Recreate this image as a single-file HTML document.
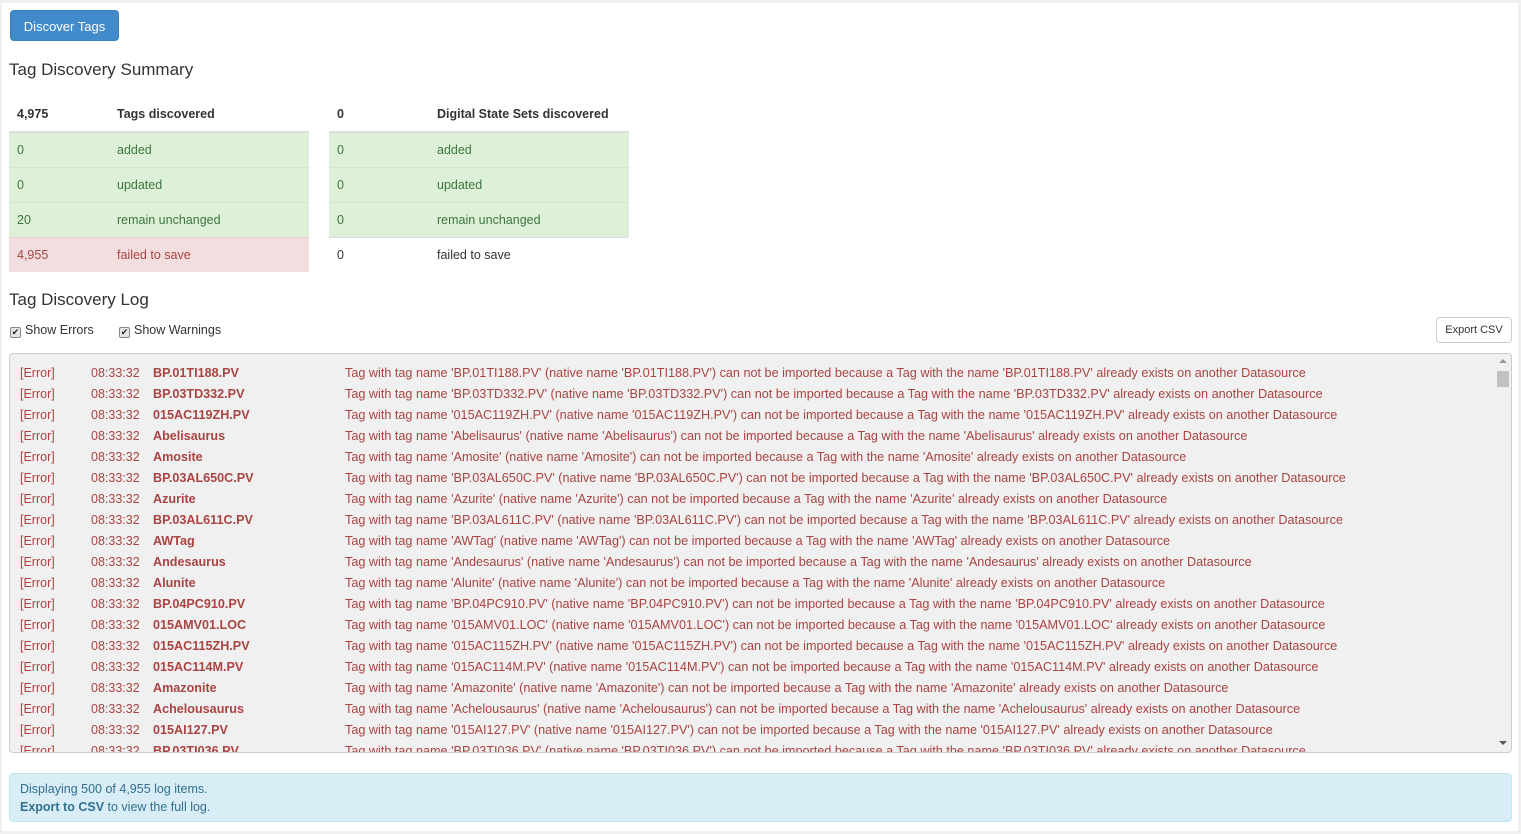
<!DOCTYPE html>
<html><head><meta charset="utf-8"><style>
*{box-sizing:border-box}
body{margin:0;width:1521px;height:834px;background:#f0f0f0;font-family:"Liberation Sans",sans-serif;font-size:13px;color:#333;overflow:hidden;position:relative}
#p{position:absolute;left:2px;top:3px;width:1516px;height:828px;background:#fff}
.abs{position:absolute}
.btn{left:10px;top:10px;width:109px;height:31px;background:#428bca;border-radius:4px;color:#fff;font-size:13px;line-height:31px;text-align:center;border:1px solid #3a7fbd}
h3{margin:0;font-weight:normal;font-size:17px;color:#333;position:absolute}
table{position:absolute;border-collapse:collapse;width:300px;font-size:12.5px}
td{height:35px;padding:0 8px;vertical-align:middle}
th{height:35px;text-align:left;padding:0 8px;border-bottom:2px solid #ddd;font-size:12.5px}
tr.s td{background:#dff0d8;color:#3c763d;border-top:1px solid #d3e6cb}
tr.d td{background:#f2dede;color:#a94442;border-top:1px solid #e8d0d0}
tr.w td{border-top:1px solid #ddd}
.cb{display:inline-block;width:11px;height:11px;border:1px solid #888;border-radius:2px;background:#e6e6e6;vertical-align:-1px;margin-right:4px;font-size:9px;line-height:9px;text-align:center;color:#222}
.exp{left:1436px;top:317px;width:76px;height:26px;border:1px solid #ccc;border-radius:4px;font-size:11px;text-align:center;line-height:24px;color:#333;background:#fff}
#log{left:9px;top:353px;width:1503px;height:400px;background:#f0f0f0;border:1px solid #ccc;border-radius:4px;overflow:hidden;color:#a94442;font-size:12.5px}
.r{position:absolute;height:21px;line-height:21px;white-space:nowrap;left:0;width:1480px}
.r span{position:absolute}
.r .e{left:10px}.r .t{left:81px}.r .n{left:143px;font-weight:bold;font-size:12.6px}.r .m{left:335px;font-size:12.65px}
#sb{position:absolute;right:0;top:0;width:17px;height:398px}
#info{left:9px;top:773px;width:1503px;height:49px;background:#d9edf7;border:1px solid #bce8f1;border-radius:4px;color:#31708f;font-size:12.5px;padding:6px 10px;line-height:18px}
</style></head><body>
<div id="p"></div>
<div class="abs btn">Discover Tags</div>
<h3 style="left:9px;top:60px">Tag Discovery Summary</h3>
<table style="left:9px;top:97px"><tr><th style="width:100px">4,975</th><th>Tags discovered</th></tr>
<tr class="s"><td>0</td><td>added</td></tr><tr class="s"><td>0</td><td>updated</td></tr><tr class="s"><td>20</td><td>remain unchanged</td></tr><tr class="d"><td>4,955</td><td>failed to save</td></tr></table>
<table style="left:329px;top:97px"><tr><th style="width:100px">0</th><th>Digital State Sets discovered</th></tr>
<tr class="s"><td>0</td><td>added</td></tr><tr class="s"><td>0</td><td>updated</td></tr><tr class="s"><td>0</td><td>remain unchanged</td></tr><tr class="w"><td>0</td><td>failed to save</td></tr></table>
<h3 style="left:9px;top:290px">Tag Discovery Log</h3>
<div class="abs" style="left:10px;top:323px;font-size:12.5px"><span class="cb">✔</span>Show Errors</div>
<div class="abs" style="left:119px;top:323px;font-size:12.5px"><span class="cb">✔</span>Show Warnings</div>
<div class="abs exp">Export CSV</div>
<div class="abs" id="log">
<div class="r" style="top:9px"><span class="e">[Error]</span><span class="t">08:33:32</span><span class="n">BP.01TI188.PV</span><span class="m">Tag with tag name 'BP.01TI188.PV' (native name 'BP.01TI188.PV') can not be imported because a Tag with the name 'BP.01TI188.PV' already exists on another Datasource</span></div>
<div class="r" style="top:30px"><span class="e">[Error]</span><span class="t">08:33:32</span><span class="n">BP.03TD332.PV</span><span class="m">Tag with tag name 'BP.03TD332.PV' (native name 'BP.03TD332.PV') can not be imported because a Tag with the name 'BP.03TD332.PV' already exists on another Datasource</span></div>
<div class="r" style="top:51px"><span class="e">[Error]</span><span class="t">08:33:32</span><span class="n">015AC119ZH.PV</span><span class="m">Tag with tag name '015AC119ZH.PV' (native name '015AC119ZH.PV') can not be imported because a Tag with the name '015AC119ZH.PV' already exists on another Datasource</span></div>
<div class="r" style="top:72px"><span class="e">[Error]</span><span class="t">08:33:32</span><span class="n">Abelisaurus</span><span class="m">Tag with tag name 'Abelisaurus' (native name 'Abelisaurus') can not be imported because a Tag with the name 'Abelisaurus' already exists on another Datasource</span></div>
<div class="r" style="top:93px"><span class="e">[Error]</span><span class="t">08:33:32</span><span class="n">Amosite</span><span class="m">Tag with tag name 'Amosite' (native name 'Amosite') can not be imported because a Tag with the name 'Amosite' already exists on another Datasource</span></div>
<div class="r" style="top:114px"><span class="e">[Error]</span><span class="t">08:33:32</span><span class="n">BP.03AL650C.PV</span><span class="m">Tag with tag name 'BP.03AL650C.PV' (native name 'BP.03AL650C.PV') can not be imported because a Tag with the name 'BP.03AL650C.PV' already exists on another Datasource</span></div>
<div class="r" style="top:135px"><span class="e">[Error]</span><span class="t">08:33:32</span><span class="n">Azurite</span><span class="m">Tag with tag name 'Azurite' (native name 'Azurite') can not be imported because a Tag with the name 'Azurite' already exists on another Datasource</span></div>
<div class="r" style="top:156px"><span class="e">[Error]</span><span class="t">08:33:32</span><span class="n">BP.03AL611C.PV</span><span class="m">Tag with tag name 'BP.03AL611C.PV' (native name 'BP.03AL611C.PV') can not be imported because a Tag with the name 'BP.03AL611C.PV' already exists on another Datasource</span></div>
<div class="r" style="top:177px"><span class="e">[Error]</span><span class="t">08:33:32</span><span class="n">AWTag</span><span class="m">Tag with tag name 'AWTag' (native name 'AWTag') can not be imported because a Tag with the name 'AWTag' already exists on another Datasource</span></div>
<div class="r" style="top:198px"><span class="e">[Error]</span><span class="t">08:33:32</span><span class="n">Andesaurus</span><span class="m">Tag with tag name 'Andesaurus' (native name 'Andesaurus') can not be imported because a Tag with the name 'Andesaurus' already exists on another Datasource</span></div>
<div class="r" style="top:219px"><span class="e">[Error]</span><span class="t">08:33:32</span><span class="n">Alunite</span><span class="m">Tag with tag name 'Alunite' (native name 'Alunite') can not be imported because a Tag with the name 'Alunite' already exists on another Datasource</span></div>
<div class="r" style="top:240px"><span class="e">[Error]</span><span class="t">08:33:32</span><span class="n">BP.04PC910.PV</span><span class="m">Tag with tag name 'BP.04PC910.PV' (native name 'BP.04PC910.PV') can not be imported because a Tag with the name 'BP.04PC910.PV' already exists on another Datasource</span></div>
<div class="r" style="top:261px"><span class="e">[Error]</span><span class="t">08:33:32</span><span class="n">015AMV01.LOC</span><span class="m">Tag with tag name '015AMV01.LOC' (native name '015AMV01.LOC') can not be imported because a Tag with the name '015AMV01.LOC' already exists on another Datasource</span></div>
<div class="r" style="top:282px"><span class="e">[Error]</span><span class="t">08:33:32</span><span class="n">015AC115ZH.PV</span><span class="m">Tag with tag name '015AC115ZH.PV' (native name '015AC115ZH.PV') can not be imported because a Tag with the name '015AC115ZH.PV' already exists on another Datasource</span></div>
<div class="r" style="top:303px"><span class="e">[Error]</span><span class="t">08:33:32</span><span class="n">015AC114M.PV</span><span class="m">Tag with tag name '015AC114M.PV' (native name '015AC114M.PV') can not be imported because a Tag with the name '015AC114M.PV' already exists on another Datasource</span></div>
<div class="r" style="top:324px"><span class="e">[Error]</span><span class="t">08:33:32</span><span class="n">Amazonite</span><span class="m">Tag with tag name 'Amazonite' (native name 'Amazonite') can not be imported because a Tag with the name 'Amazonite' already exists on another Datasource</span></div>
<div class="r" style="top:345px"><span class="e">[Error]</span><span class="t">08:33:32</span><span class="n">Achelousaurus</span><span class="m">Tag with tag name 'Achelousaurus' (native name 'Achelousaurus') can not be imported because a Tag with the name 'Achelousaurus' already exists on another Datasource</span></div>
<div class="r" style="top:366px"><span class="e">[Error]</span><span class="t">08:33:32</span><span class="n">015AI127.PV</span><span class="m">Tag with tag name '015AI127.PV' (native name '015AI127.PV') can not be imported because a Tag with the name '015AI127.PV' already exists on another Datasource</span></div>
<div class="r" style="top:387px"><span class="e">[Error]</span><span class="t">08:33:32</span><span class="n">BP.03TI036.PV</span><span class="m">Tag with tag name 'BP.03TI036.PV' (native name 'BP.03TI036.PV') can not be imported because a Tag with the name 'BP.03TI036.PV' already exists on another Datasource</span></div>
<div id="sb"><div style="position:absolute;left:5px;top:5px;width:0;height:0;border-left:4px solid transparent;border-right:4px solid transparent;border-bottom:4px solid #999"></div><div style="position:absolute;left:3px;top:17px;width:12px;height:16px;background:#c1c1c1"></div><div style="position:absolute;left:5px;bottom:7px;width:0;height:0;border-left:4px solid transparent;border-right:4px solid transparent;border-top:4px solid #555"></div></div>
</div>
<div class="abs" id="info">Displaying 500 of 4,955 log items.<br><b>Export to CSV</b> to view the full log.</div>
</body></html>
